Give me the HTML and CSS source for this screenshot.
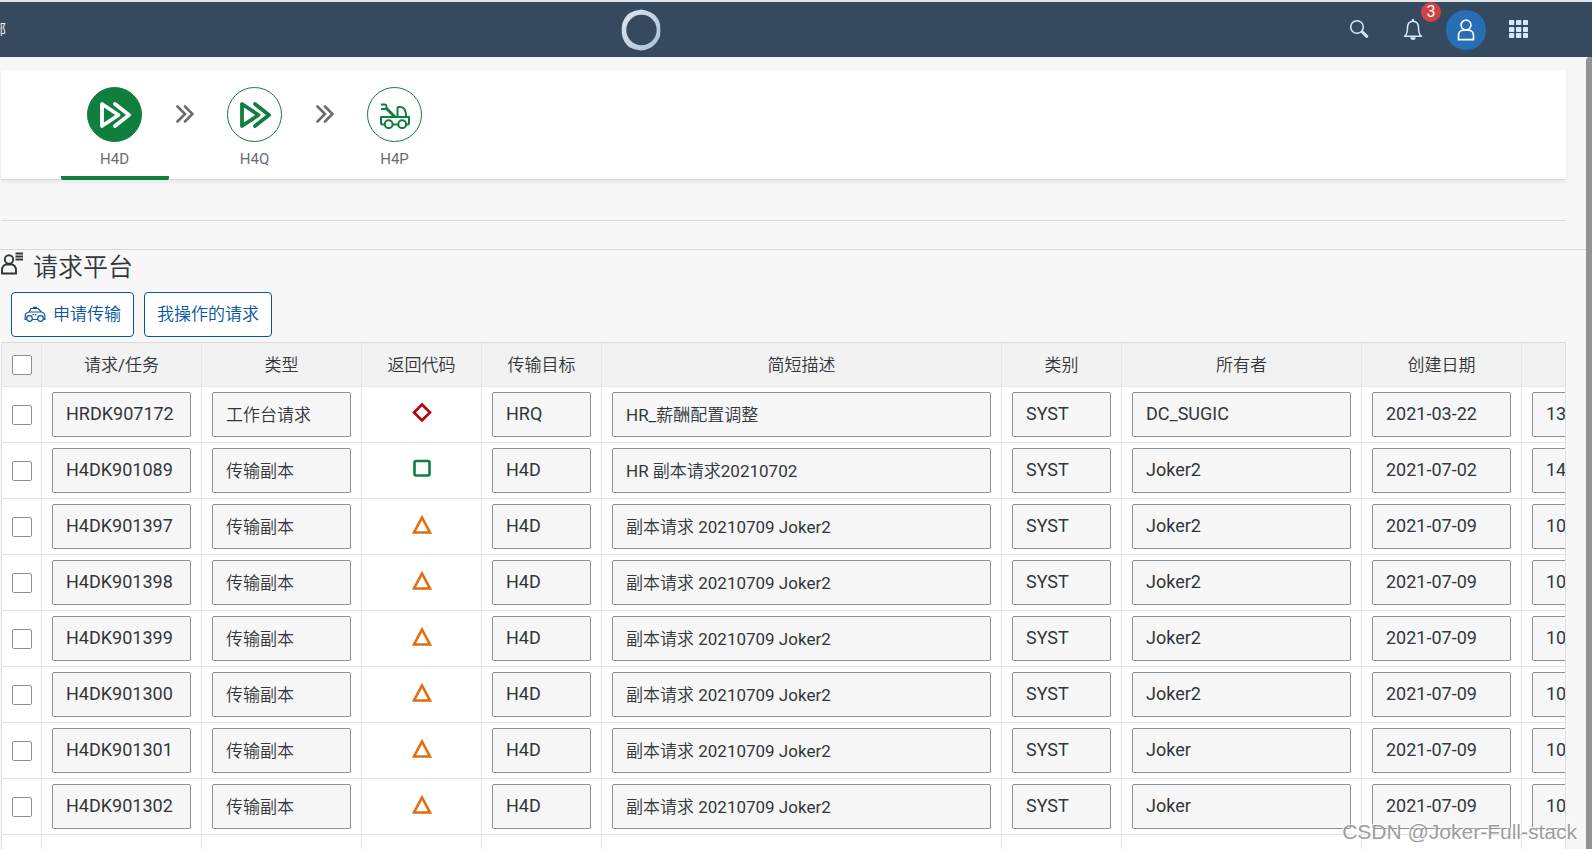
FILE: index.html
```html
<!DOCTYPE html>
<html lang="zh-CN">
<head>
<meta charset="utf-8">
<title>请求平台</title>
<link rel="stylesheet" href="styles.css">
</head>
<body>
<header class="shell">
  <div class="shell-title">部</div>
  <svg class="logo" viewBox="0 0 40 42" role="img" aria-label="Logo"><defs><linearGradient id="ring" x1="0" y1="0" x2="1" y2="1"><stop offset="0" stop-color="#dfe5ec"/><stop offset="1" stop-color="#a9bfd8"/></linearGradient></defs><path fill="url(#ring)" fill-rule="evenodd" d="M20 .5C24 1 26 2 29 3C34 5 38 10 39 15C39.500 19 39.500 23 39 27C37 33 32 38 28 39.500C25 40.500 23 41.500 20 41.500C16 41 12 40 9 38.500C5 36 2 31 1 26C.5 22 .5 18 1.500 14C3.500 9 6 5 11 3C14 1.500 17 1 20 .5ZM20.500 5.800A15.200 15.200 0 1 0 20.500 36.200A15.200 15.200 0 1 0 20.500 5.800Z"/></svg>
  <nav class="shell-actions">
    <button class="shell-btn" aria-label="搜索"><svg width="20" height="20" viewBox="0 0 20 20" fill="none" stroke="#d1e8ff"><circle cx="7" cy="8" r="6.300" stroke-width="1.500"/><path d="M11.700 12.700L13 14" stroke-width="1.800"/><path d="M13 13.700L16.800 17.300" stroke-width="3" stroke-linecap="round"/></svg></button>
    <button class="shell-btn" aria-label="通知"><svg width="20" height="22" viewBox="0 0 20 22" fill="none" stroke="#d1e8ff" stroke-width="1.500"><path d="M1.500 18.300C4 16.500 4.500 14 4.500 10C4.500 5.500 6.500 3.200 10 3.200S15.500 5.500 15.500 10C15.500 14 16 16.500 18.500 18.300Z" stroke-linejoin="round"/><path d="M10 1V3.500" stroke-width="2"/><path d="M7.300 19.200a2.700 2.700 0 0 0 5.400 0z" fill="#d1e8ff" stroke="none"/></svg><span class="badge">3</span></button>
    <button class="avatar" aria-label="用户"><svg width="18" height="22" viewBox="0 0 18 22" fill="none" stroke="#fff" stroke-width="1.700"><circle cx="9" cy="6" r="4.900"/><path d="M1.500 20.700V16.500C1.500 13.500 3.500 11.200 6.500 11.200H11.500C14.500 11.200 16.500 13.500 16.500 16.500V20.700Z"/></svg></button>
    <button class="shell-btn" aria-label="产品"><svg width="20" height="20" viewBox="0 0 20 20" fill="#d1e8ff"><rect x="0" y="1" width="5.300" height="5" rx=".8"/><rect x="7" y="1" width="5.300" height="5" rx=".8"/><rect x="14" y="1" width="5" height="5" rx=".8"/><rect x="0" y="8" width="5.300" height="5" rx=".8"/><rect x="7" y="8" width="5.300" height="5" rx=".8"/><rect x="14" y="8" width="5" height="5" rx=".8"/><rect x="0" y="14" width="5.300" height="5" rx=".8"/><rect x="7" y="14" width="5.300" height="5" rx=".8"/><rect x="14" y="14" width="5" height="5" rx=".8"/></svg></button>
  </nav>
</header>
<main class="page">
  <div class="content">
    <nav class="steps">
      <a class="step active" href="#h4d"><span class="step-icon"><svg width="32" height="28" viewBox="0 0 32 28" fill="none" stroke="currentColor" stroke-width="3.800" stroke-linejoin="round" stroke-linecap="round"><path d="M3 3V25L19.500 14Z"/><path d="M16 3L30 14L16 25"/></svg></span><span>H4D</span></a>
      <svg class="chev" width="18" height="18" viewBox="0 0 18 18" fill="none" stroke="#6a6d70" stroke-width="2.600" stroke-linecap="round"><path d="M1.500 1.500L9 9L1.500 16.500M9 1.500L16.500 9L9 16.500"/></svg>
      <a class="step" href="#h4q"><span class="step-icon"><svg width="32" height="28" viewBox="0 0 32 28" fill="none" stroke="currentColor" stroke-width="3.800" stroke-linejoin="round" stroke-linecap="round"><path d="M3 3V25L19.500 14Z"/><path d="M16 3L30 14L16 25"/></svg></span><span>H4Q</span></a>
      <svg class="chev" width="18" height="18" viewBox="0 0 18 18" fill="none" stroke="#6a6d70" stroke-width="2.600" stroke-linecap="round"><path d="M1.500 1.500L9 9L1.500 16.500M9 1.500L16.500 9L9 16.500"/></svg>
      <a class="step" href="#h4p"><span class="step-icon"><svg width="32" height="28" viewBox="0 0 32 28" fill="none" stroke="currentColor" stroke-width="2" stroke-linejoin="round"><path d="M6 23.500H3.500Q2 23.500 2 22V16H30V22Q30 23.500 28.500 23.500H27M13.500 23.500H19"/><circle cx="9.700" cy="23.200" r="3.900"/><circle cx="23.200" cy="23.200" r="3.900"/><path d="M18.500 16V7.500Q18.500 6 20 6H21.500C25 6 27 10 27.200 16"/><path d="M2 3.500H5.500Q7.500 3.500 7.500 5.500V6Q7.500 8 5.500 8H2" stroke-width="1.800"/><path d="M7 7L16 16" stroke-width="3"/></svg></span><span>H4P</span></a>
    </nav>
    <hr class="rule">
  </div>
  <section class="panel">
    <h1 class="title"><svg width="24" height="26" viewBox="0 0 24 26" fill="none" stroke="#32363a" stroke-width="1.900"><circle cx="9" cy="9.500" r="4.200"/><path d="M2 23.500V20C2 17 4 14.500 6.500 14.500H11.500C14 14.500 16 17 16 20V23.500Z"/><path d="M15.500 3.500H23M15.500 6.500H23M15.500 9.500H23"/></svg>请求平台</h1>
    <div class="toolbar">
      <button class="btn"><svg width="22" height="16" viewBox="0 0 22 16" fill="none" stroke="#0854a0" stroke-width="1.200"><path d="M2.600 13.500H1.200V9.500C1.200 7.500 3 6.500 5 6L7 2.500H14L17.500 6C19.500 6.500 20.800 8 20.800 10V13.500H19.400M5 6H17.500M9.500 2.500V1.300h3v1.200M8.400 13.500H13.600"/><circle cx="5.500" cy="12.500" r="2.800"/><circle cx="16.500" cy="12.500" r="2.800"/><path d="M8.500 8.700h5" stroke-dasharray="1.500 1"/></svg>申请传输</button>
      <button class="btn">我操作的请求</button>
    </div>
    <div class="table-wrap">
      <table class="grid">
        <colgroup><col class="c-check"><col class="c-m"><col class="c-m"><col class="c-s"><col class="c-s"><col class="c-xl"><col class="c-s"><col class="c-l"><col class="c-m"><col class="c-m"></colgroup>
        <thead><tr><th><input type="checkbox" class="check" aria-label="全选"></th><th>请求/任务</th><th>类型</th><th>返回代码</th><th>传输目标</th><th>简短描述</th><th>类别</th><th>所有者</th><th>创建日期</th><th></th></tr></thead>
        <tbody id="rows"></tbody>
      </table>
    </div>
  </section>
</main>
<div class="scrollbar"></div>
<div class="watermark">CSDN @Joker-Full-stack</div>
<script src="app.js"></script>
</body>
</html>
```

FILE: styles.css
```css
* { box-sizing: border-box; }
body {
  display: flex;
  flex-direction: column;
  margin: 0;
  height: 100vh;
  overflow: hidden;
  background: #f7f7f7;
  color: #32363a;
  font-family: Roboto, "Noto Sans CJK SC DemiLight", "Noto Sans CJK SC", sans-serif;
  font-size: 18px;
}
button { font: inherit; cursor: pointer; }
.shell {
  display: grid;
  grid-template-columns: 39vw 40px 1fr;
  align-items: center;
  flex: none;
  height: 57px;
  padding-right: 53px;
  border-top: 2px solid #dfe6ea;
  background: #354a5f;
}
.shell-title { padding-bottom: 3px; color: #fff; font-size: 14px; text-indent: -8px; }
.logo { width: 40px; height: 42px; }
.shell-actions { display: flex; align-items: center; justify-content: flex-end; gap: 13px; }
.shell-btn {
  position: relative;
  display: grid;
  place-items: center;
  width: 40px;
  height: 40px;
  padding: 0 0 2px;
  border: 0;
  background: none;
}
.badge {
  position: absolute;
  top: -8px;
  left: 28px;
  width: 20px;
  height: 20px;
  border-radius: 50%;
  background: #d04343;
  color: #fff;
  font-size: 16px;
  line-height: 20px;
  text-align: center;
}
.avatar {
  display: grid;
  place-items: center;
  width: 40px;
  height: 40px;
  padding: 0;
  border: 0;
  border-radius: 50%;
  background: #286eb4;
}
.page { flex: 1; min-height: 0; margin-right: 6px; overflow: hidden; }
.content { padding: 13px 20px 0 1px; }
.steps {
  display: flex;
  align-items: flex-start;
  height: 110px;
  padding-left: 60px;
  border-bottom: 1px solid #d9d9d9;
  background: #fff;
  box-shadow: 0 2px 4px rgba(0, 0, 0, 0.08);
}
.step {
  display: flex;
  flex-direction: column;
  align-items: center;
  gap: 7px;
  width: 108px;
  height: 110px;
  padding: 17px 1px 0 0;
  border-bottom: 4px solid transparent;
  color: #6a6d70;
  font-size: 15px;
  line-height: 20px;
  text-decoration: none;
}
.step.active { border-bottom-color: #107e3e; border-radius: 2px; }
.step-icon {
  display: grid;
  place-items: center;
  width: 55px;
  height: 55px;
  border: 1px solid #107e3e;
  border-radius: 50%;
  color: #107e3e;
}
.active .step-icon { background: #107e3e; color: #fff; }
.chev { margin: 35px 7px 0; }
.rule { margin: 40px 0 0; border: 0; border-top: 1px solid #d9d9d9; }
.panel { margin-top: 28px; border-top: 1px solid #d9d9d9; }
.title {
  display: flex;
  gap: 9px;
  margin: 0;
  height: 36px;
  font-size: 25px;
  line-height: 36px;
  font-weight: 400;
}
.toolbar { display: flex; gap: 10px; padding: 6px 11px 5px; }
.btn {
  display: flex;
  align-items: center;
  gap: 7px;
  height: 45px;
  padding: 0 12px 4px;
  border: 1px solid #0854a0;
  border-radius: 4px;
  background: #fff;
  color: #0854a0;
  font-size: 17px;
}
.btn svg { margin-top: 3px; }
.table-wrap {
  margin: 0 20px 0 1px;
  overflow: hidden;
  border: 1px solid #e0e0e0;
  border-top-color: #d9d9d9;
  background: #fff;
}
.grid { width: 1680px; table-layout: fixed; border-collapse: separate; border-spacing: 0; }
.c-check { width: 40px; }
.c-s { width: 120px; }
.c-m { width: 160px; }
.c-l { width: 240px; }
.c-xl { width: 400px; }
.grid th, .grid td { padding: 0 10px; border-right: 1px solid #e5e5e5; border-bottom: 1px solid #e5e5e5; text-align: center; vertical-align: middle; }
.grid th { height: 44px; padding-top: 1px; background: #f2f2f2; font-size: 17px; font-weight: 400; line-height: 26px; }
.grid td { height: 56px; }
.check {
  display: block;
  appearance: none;
  width: 20px;
  height: 20px;
  margin: 0;
  border: 1px solid #89919a;
  border-radius: 2px;
  background: #fff;
}
.field {
  display: block;
  width: 100%;
  height: 45px;
  padding: 0 13px 2px;
  border: 1px solid #89919a;
  border-radius: 2px;
  background: #f7f7f7;
  color: #32363a;
  font: inherit;
}
.field-cjk { font-size: 17px; }
.status { display: block; margin: 0 auto 4px; }
.scrollbar {
  position: absolute;
  top: 57px;
  right: 0;
  bottom: 0;
  width: 6px;
  border-radius: 4px 0 0 0;
  background: #929292;
}
.watermark {
  position: absolute;
  right: 15px;
  bottom: 4px;
  color: rgba(140, 140, 140, 0.85);
  font: 21px/26px "Liberation Sans", sans-serif;
  text-shadow: -1px -1px 0 rgba(255, 255, 255, 0.8);
}
```

FILE: app.js
```js
const rows = [
  ["HRDK907172", "工作台请求", "error", "HRQ", "HR_薪酬配置调整", "SYST", "DC_SUGIC", "2021-03-22", "13"],
  ["H4DK901089", "传输副本", "ok", "H4D", "HR 副本请求20210702", "SYST", "Joker2", "2021-07-02", "14"],
  ["H4DK901397", "传输副本", "warn", "H4D", "副本请求 20210709 Joker2", "SYST", "Joker2", "2021-07-09", "10"],
  ["H4DK901398", "传输副本", "warn", "H4D", "副本请求 20210709 Joker2", "SYST", "Joker2", "2021-07-09", "10"],
  ["H4DK901399", "传输副本", "warn", "H4D", "副本请求 20210709 Joker2", "SYST", "Joker2", "2021-07-09", "10"],
  ["H4DK901300", "传输副本", "warn", "H4D", "副本请求 20210709 Joker2", "SYST", "Joker2", "2021-07-09", "10"],
  ["H4DK901301", "传输副本", "warn", "H4D", "副本请求 20210709 Joker2", "SYST", "Joker", "2021-07-09", "10"],
  ["H4DK901302", "传输副本", "warn", "H4D", "副本请求 20210709 Joker2", "SYST", "Joker", "2021-07-09", "10"]
];
const labels = ["请求/任务", "类型", "返回代码", "传输目标", "简短描述", "类别", "所有者", "创建日期", "创建时间"];
const shapes = {
  error: '<path d="M10 1.500L18 9.500L10 17.500L2 9.500Z" stroke="#bb0000"/>',
  ok: '<rect x="2.500" y="2" width="15" height="14.500" rx="1.500" stroke="#107e3e"/>',
  warn: '<path d="M10 2.500L18 17.500H2Z" stroke="#df6e0c"/>'
};
const cell = (value, i) => {
  if (i === 2) return `<td><svg class="status" width="20" height="20" viewBox="0 0 20 20" fill="none" stroke-width="2.600">${shapes[value]}</svg></td>`;
  const cls = i === 1 || i === 4 ? "field field-cjk" : "field";
  return `<td><input class="${cls}" type="text" readonly aria-label="${labels[i]}" value="${value}"></td>`;
};
const check = '<td><input type="checkbox" class="check" aria-label="选择行"></td>';
document.getElementById("rows").innerHTML =
  rows.map(r => `<tr>${check}${r.map(cell).join("")}</tr>`).join("") +
  `<tr>${"<td></td>".repeat(10)}</tr>`;
```
